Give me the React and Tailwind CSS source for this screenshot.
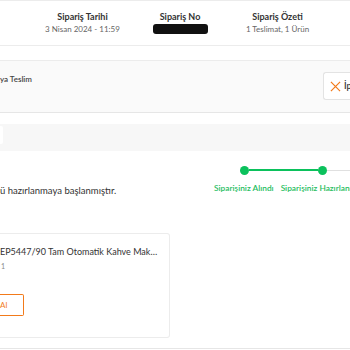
export default function App() {
  return (
    <div className="h-[350px] w-[350px] overflow-hidden bg-white text-[#333]" style={{ fontFamily: 'Lato, "Noto Sans", sans-serif' }}>
      {/* Summary header */}
      <div className="flex h-[46px] border-t border-b border-[#ececec] pl-[35px] pt-[10px]">
        <div className="w-[95px] text-center">
          <p className="text-[9px] font-bold leading-[12px] text-[#333]">Sipariş Tarihi</p>
          <p className="text-[8px] leading-[12px] text-[#666]">3 Nisan 2024 - 11:59</p>
        </div>
        <div className="flex w-[100px] flex-col items-center">
          <p className="text-[9px] font-bold leading-[12px] text-[#333]">Sipariş No</p>
          <div className="mt-[1px] h-[10px] w-[55px] rounded-[3px] bg-[#111]" />
        </div>
        <div className="w-[95px] text-center">
          <p className="text-[9px] font-bold leading-[12px] text-[#333]">Sipariş Özeti</p>
          <p className="text-[8px] leading-[12px] text-[#666]">1 Teslimat, 1 Ürün</p>
        </div>
      </div>

      {/* Delivery card */}
      <div className="mt-[14px] border-t border-[#ececec]">
        <div className="flex h-[52px] items-start justify-between border-b border-[#e6e6e6] bg-[#fafafa]">
          <p className="pt-[12px] text-[8px] font-semibold text-[#444]">ya Teslim</p>
          <button className="mt-[11px] flex h-[28px] w-[27px] items-center gap-[3px] overflow-hidden rounded-l-[3px] border border-r-0 border-[#e3e3e3] bg-white pl-[6px]">
            <svg width="11" height="11" viewBox="0 0 12 12" className="shrink-0">
              <path d="M1 1 L11 11 M11 1 L1 11" stroke="#f27a1a" strokeWidth="1.3" />
            </svg>
            <span className="text-[9px] font-semibold text-[#333]">İp</span>
          </button>
        </div>

        <div className="pt-[11px]">
          <div className="flex h-[27px] items-start bg-[#f7f7f7] pt-[2px]">
            <div className="h-[18px] w-[3px] rounded-r-[2px] bg-white" />
          </div>

          <div className="flex items-start justify-between pt-[14px]">
            <p className="pt-[19px] text-[9.5px] text-[#333]">ü hazırlanmaya başlanmıştır.</p>
            <div className="flex w-[136px] shrink-0 flex-col items-start">
              <div className="flex h-[10px] items-center pl-[26px]">
                <span className="h-[9px] w-[9px] shrink-0 rounded-full bg-[#0bc15c]" />
                <span className="h-[1.5px] w-[69px] shrink-0 bg-[#0bc15c]" />
                <span className="h-[9px] w-[9px] shrink-0 rounded-full bg-[#0bc15c]" />
                <span className="h-[1px] w-[25px] shrink-0 bg-[#e0e0e0]" />
              </div>
              <div className="mt-[7px] flex gap-[7px] whitespace-nowrap text-[8.3px] font-semibold text-[#1ebd5e]">
                <span>Siparişiniz Alındı</span>
                <span>Siparişiniz Hazırlanıyor</span>
              </div>
            </div>
          </div>

          {/* Product card */}
          <div className="mt-[35px] h-[105px] w-[170px] rounded-r-[3px] border border-l-0 border-[#ececec] bg-white pt-[11px]">
            <p className="truncate pr-[10px] text-[9px] text-[#333]">EP5447/90 Tam Otomatik Kahve Makinesi</p>
            <p className="mt-[2px] pl-[1px] text-[7px] text-[#888]">1</p>
            <button className="mt-[23px] flex h-[22px] w-[24px] items-center rounded-r-[2px] border border-l-0 border-[#f27a1a] bg-white text-[8px] text-[#f27a1a]">
              Al
            </button>
          </div>

          <div className="mt-[10px] border-b border-[#e6e6e6]" />
        </div>
      </div>
    </div>
  )
}
